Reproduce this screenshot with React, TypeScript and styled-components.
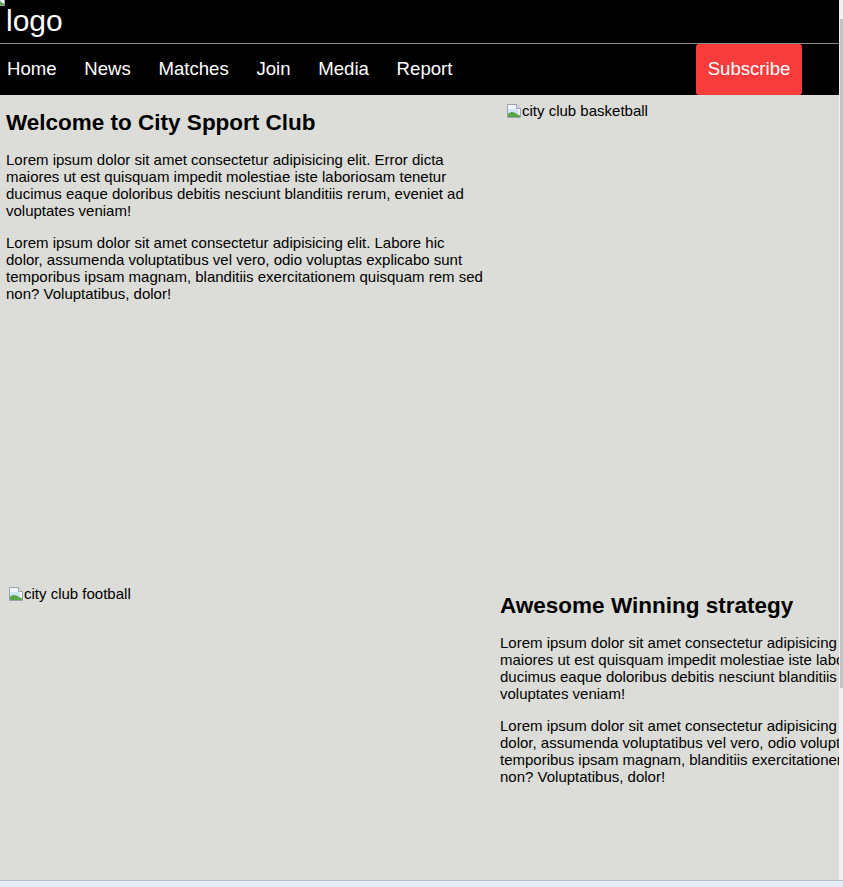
import { createGlobalStyle, styled } from 'styled-components';

const GlobalStyle = createGlobalStyle`
  html, body {
    margin: 0;
    padding: 0;
    overflow: hidden;
  }
  body {
    font-family: 'Liberation Sans', Arial, sans-serif;
    font-size: 15px;
  }
`;

const navLinks = ['Home', 'News', 'Matches', 'Join', 'Media', 'Report'];

const para1 =
  'Lorem ipsum dolor sit amet consectetur adipisicing elit. Error dicta maiores ut est quisquam impedit molestiae iste laboriosam tenetur ducimus eaque doloribus debitis nesciunt blanditiis rerum, eveniet ad voluptates veniam!';
const para2 =
  'Lorem ipsum dolor sit amet consectetur adipisicing elit. Labore hic dolor, assumenda voluptatibus vel vero, odio voluptas explicabo sunt temporibus ipsam magnam, blanditiis exercitationem quisquam rem sed non? Voluptatibus, dolor!';

function BrokenImage() {
  return (
    <svg width="16" height="16" viewBox="0 0 16 16">
      <path d="M1.5 1.5h9l4 4v9h-13z" fill="#f4f6f9" stroke="#9aa3ad" />
      <path d="M10.5 1.5v4h4" fill="#e2e6ea" stroke="#9aa3ad" />
      <path d="M2 6h10v5H2z" fill="#cfe4f6" />
      <path d="M2 14V11c3-3 6-2 9 0s3 1 3 1v2z" fill="#58a845" />
    </svg>
  );
}

export default function App() {
  return (
    <>
      <GlobalStyle />
      <Screen>
        <Row>
          <Viewport>
            <TopBar>
              <Logo>
                <LogoIcon>
                  <BrokenImage />
                </LogoIcon>
                logo
              </Logo>
            </TopBar>
            <Nav>
              <NavList>
                {navLinks.map((l) => (
                  <NavItem key={l}>{l}</NavItem>
                ))}
              </NavList>
              <SubscribeButton>Subscribe</SubscribeButton>
            </Nav>
            <Main>
              <Section $gap={8} $height={483}>
                <TextCol $width={490}>
                  <Title>Welcome to City Spport Club</Title>
                  <Para>{para1}</Para>
                  <Para>{para2}</Para>
                </TextCol>
                <ImageCol>
                  <AltImage>
                    <BrokenImage />
                    city club basketball
                  </AltImage>
                </ImageCol>
              </Section>
              <Section $height={484}>
                <ImageCol $width={494}>
                  <AltImage>
                    <BrokenImage />
                    city club football
                  </AltImage>
                </ImageCol>
                <TextCol $width={490}>
                  <Title>Awesome Winning strategy</Title>
                  <Para>{para1}</Para>
                  <Para>{para2}</Para>
                </TextCol>
              </Section>
            </Main>
          </Viewport>
          <VScroll>
            <VThumb />
          </VScroll>
        </Row>
        <HScroll />
      </Screen>
    </>
  );
}

const Screen = styled.div`
  display: flex;
  flex-direction: column;
  width: 843px;
  height: 887px;
`;

const Row = styled.div`
  display: flex;
  height: 880px;
`;

const Viewport = styled.div`
  width: 839px;
  height: 880px;
  overflow: hidden;
  background-color: #dcddd8;
`;

const VScroll = styled.div`
  width: 4px;
  background-color: #f1f1f1;
  padding-top: 19px;
`;

const VThumb = styled.div`
  width: 3px;
  margin-left: 1px;
  height: 669px;
  background-color: #c4c4c4;
`;

const HScroll = styled.div`
  height: 6px;
  border-top: 1px solid #b9bdc2;
  background-color: #e6ecf6;
`;

const TopBar = styled.header`
  height: 43px;
  background-color: #000;
  border-bottom: 1px solid #8a8a8a;
  overflow: hidden;
`;

const Logo = styled.div`
  display: flex;
  align-items: flex-start;
  color: #fff;
  font-size: 30px;
  line-height: 43px;
  margin-top: -1px;
`;

const LogoIcon = styled.span`
  display: block;
  margin: -8px 0 0 -10px;
  line-height: 0;
`;

const Nav = styled.nav`
  display: flex;
  align-items: stretch;
  height: 51px;
  width: 839px;
  background-color: #000;
`;

const NavList = styled.div`
  display: flex;
  align-items: center;
  gap: 27.7px;
  padding: 0 0 2px 7px;
  flex: 1;
`;

const NavItem = styled.a`
  color: #fff;
  font-size: 18.6px;
  cursor: pointer;
`;

const SubscribeButton = styled.button`
  background-color: #f83c3c;
  color: #fff;
  border: none;
  border-radius: 3px;
  font-family: 'Liberation Sans', Arial, sans-serif;
  font-size: 18.6px;
  padding: 0 0 2px;
  margin-right: 37px;
  width: 106px;
`;

const Main = styled.main`
  width: 1000px;
`;

const Section = styled.section<{ $gap?: number; $height: number }>`
  display: flex;
  gap: ${(p) => p.$gap ?? 0}px;
  height: ${(p) => p.$height}px;
`;

const TextCol = styled.div<{ $width?: number }>`
  width: ${(p) => (p.$width ? `${p.$width}px` : 'auto')};
  box-sizing: border-box;
  padding: 0 6px;
  color: #000;
  flex-shrink: 0;
`;

const ImageCol = styled.div<{ $width?: number }>`
  width: ${(p) => (p.$width ? `${p.$width}px` : 'auto')};
  flex-shrink: 0;
  padding: 7px 8px;
  box-sizing: border-box;
`;

const AltImage = styled.div`
  display: flex;
  align-items: center;
  font-size: 15px;
  line-height: 17px;
  color: #000;
`;

const Title = styled.h2`
  font-size: 22.5px;
  line-height: 26px;
  margin: 15px 0 15px;
`;

const Para = styled.p`
  font-size: 15px;
  line-height: 17px;
  margin: 15px 0;
`;
